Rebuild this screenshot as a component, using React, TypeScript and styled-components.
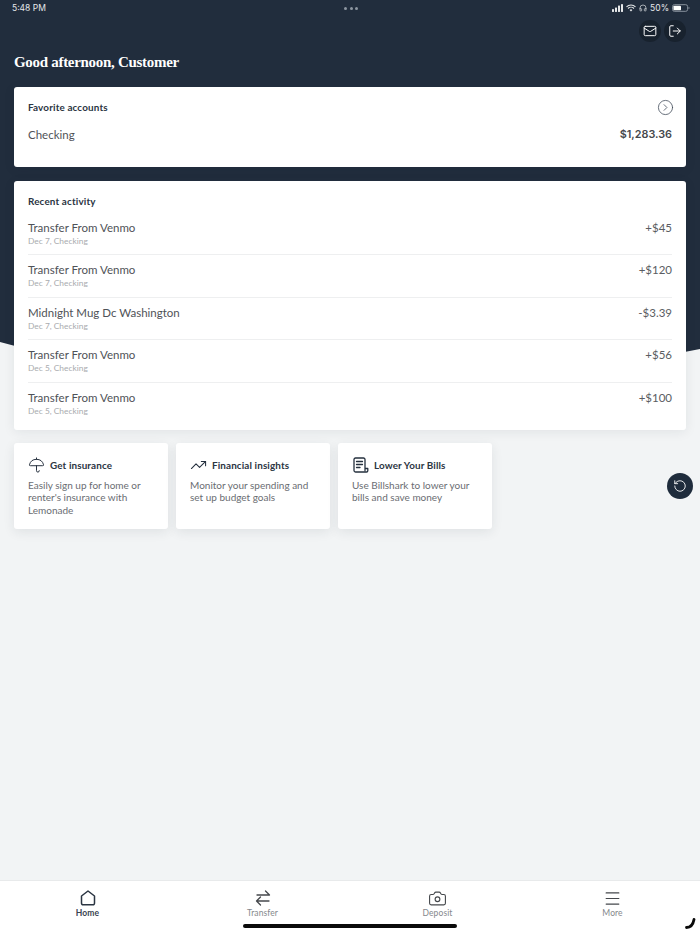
import React from "react";
import styled, { createGlobalStyle } from "styled-components";
import { Mail, LogOut, CircleChevronRight, Umbrella, TrendingUp, Camera, Menu, RotateCcw, Headphones } from "lucide-react";

const Global = createGlobalStyle`
  html, body { margin: 0; padding: 0; background: #f2f4f5; }
  * { box-sizing: border-box; }
`;
const Page = styled.div`
  position: relative; width: 700px; height: 934px; overflow: hidden; display: flex; flex-direction: column;
  background: #f2f4f5; font-family: "Lato", "Noto Sans", sans-serif; color: #4a4d52;
`;
const Backdrop = styled.svg`position: absolute; left: 0; top: 0; width: 700px; height: 370px;`;
const Main = styled.main`position: relative; flex: 1; min-height: 0; display: flex; flex-direction: column;`;
const StatusBar = styled.div`
  height: 16px; padding: 0 10px 0 12px; display: grid; grid-template-columns: 1fr auto 1fr; align-items: center;
  color: #e6e8ea; font: 8.5px "Inter", sans-serif;
`;
const Dots = styled.div`display: flex; gap: 2.5px; span { width: 3px; height: 3px; border-radius: 50%; background: #8d96a1; }`;
const StatusRight = styled.div`display: flex; justify-content: flex-end; align-items: center; gap: 3px;`;
const Actions = styled.div`display: flex; justify-content: flex-end; gap: 3px; padding: 4px 14px 0 0;`;
const Circle = styled.div`
  width: 22px; height: 22px; border-radius: 50%; background: #18222e; color: #fff;
  display: flex; align-items: center; justify-content: center;
`;
const Greeting = styled.h1`
  margin: 9px 0 0 14px; height: 22px; font: 700 15px/22px "Liberation Serif", serif; color: #fff; letter-spacing: -0.3px;
`;
const Card = styled.section`
  margin: 14px 14px 0; background: #fff; border-radius: 3px; padding: 0 14px; box-shadow: 0 2px 12px rgba(30,40,50,.08);
`;
const FavCard = styled(Card)`height: 80px; padding-top: 12px;`;
const HeadRow = styled.div`display: flex; justify-content: space-between; align-items: center; height: 17px;`;
const Heading = styled.h2`margin: 0; font: 700 9.9px/17px "Lato", sans-serif; color: #2b3542; letter-spacing: .15px;`;
const Chevron = styled(CircleChevronRight)`margin-right: -1.5px;`;
const AccountRow = styled.div`display: flex; justify-content: space-between; align-items: center; margin-top: 9px; height: 18px;`;
const AccountName = styled.span`font-size: 11.5px; color: #4f5257;`;
const Balance = styled.span`font: 600 10.8px "Inter", sans-serif; color: #45484c;`;
const ActivityCard = styled(Card)`height: 249px; padding-top: 12px;`;
const Row = styled.div`
  display: flex; justify-content: space-between; height: 42.4px; padding-top: 8px;
  &:not(:last-child) { border-bottom: 1px solid #eeeff0; }
`;
const RowList = styled.div`margin-top: 3px;`;
const RowTitle = styled.div`font-size: 11.5px; line-height: 14px; color: #4f5257;`;
const RowSub = styled.div`font-size: 8.4px; line-height: 12px; color: #a9abae;`;
const Amount = styled.div`font-size: 11.5px; line-height: 14px; color: #5a5d62;`;
const Promos = styled.div`display: grid; grid-template-columns: repeat(3, 153.5px); gap: 8.5px; padding: 13px 14px 0;`;
const Promo = styled.article`
  height: 86px; background: #fff; border-radius: 3px; padding: 13px 14px 0; box-shadow: 0 3px 12px rgba(30,40,50,.09);
`;
const PromoHead = styled.div`display: flex; align-items: center; gap: 5px; height: 18px; color: #25303e;`;
const IconSlot = styled.span`width: 17px; height: 18px; display: flex; align-items: center; justify-content: center; flex: none;`;
const PromoTitle = styled.h3`margin: 0; font: 700 9.9px/18px "Lato", sans-serif; color: #2b3542; letter-spacing: .12px;`;
const PromoText = styled.p`margin: 5px 0 0; font-size: 10px; line-height: 12.3px; color: #6a6d72;`;
const Floating = styled.div`
  position: absolute; left: 667px; top: 473px; width: 26px; height: 26px; border-radius: 50%; background: #1f2c3c; color: #fff;
  display: flex; align-items: center; justify-content: center;
`;
const TabBar = styled.nav`
  height: 54px; flex: none; background: #fff; border-top: 1px solid #e8eaeb; display: grid; grid-template-columns: repeat(4, 175px);
`;
const Tab = styled.div<{ $active?: boolean }>`
  display: grid; grid-template-rows: 17px 12px; align-content: start; justify-items: center; align-items: center;
  padding-top: 8.5px; color: ${p => p.$active ? "#2b3542" : "#45484c"};
  span { font-size: 8.5px; line-height: 12px; font-weight: ${p => p.$active ? 700 : 400}; color: ${p => p.$active ? "#3a4350" : "#85888c"}; letter-spacing: .1px; }
  svg { display: block; }
`;
const HomeBar = styled.div`position: absolute; left: 243px; top: 924px; width: 214px; height: 4px; border-radius: 2px; background: #0a0a0a;`;
const Corner = styled.svg`position: absolute; left: 684px; top: 918px;`;

const rows = [
  ["Transfer From Venmo", "Dec 7, Checking", "+$45"],
  ["Transfer From Venmo", "Dec 7, Checking", "+$120"],
  ["Midnight Mug Dc Washington", "Dec 7, Checking", "-$3.39"],
  ["Transfer From Venmo", "Dec 5, Checking", "+$56"],
  ["Transfer From Venmo", "Dec 5, Checking", "+$100"],
];

const BillIcon = () => (
  <svg width="16" height="16" viewBox="0 0 16 16" fill="none" stroke="currentColor" strokeWidth="1.300" strokeLinecap="round" strokeLinejoin="round">
    <path d="M12 13.500V2.500A1.500 1.500 0 0 0 10.500 1h-8A1.500 1.500 0 0 0 1 2.500v11A1.500 1.500 0 0 0 2.500 15h11a1.300 1.300 0 0 0 1.300-1.300V11.500H12" />
    <path d="M3.500 4.500h6M3.500 7.500h6M3.500 10.500h3.500" />
  </svg>
);
const HomeIcon = () => (
  <svg width="16" height="18" viewBox="0 0 16 18" fill="none" stroke="currentColor" strokeWidth="1.500" strokeLinejoin="round">
    <path d="M8 2 L14.500 7v7.300a1.500 1.500 0 0 1-1.500 1.500H3a1.500 1.500 0 0 1-1.500-1.500V7z" />
  </svg>
);
const TransferIcon = () => (
  <svg width="16" height="18" viewBox="0 0 16 18" fill="none" stroke="currentColor" strokeWidth="1.300" strokeLinecap="round" strokeLinejoin="round">
    <path d="M2 6h12.500M10.500 2l4 4M14 12H1.500M5.500 8l-4 4 4 4" />
  </svg>
);
const Signal = () => (
  <svg width="11" height="8" viewBox="0 0 11 8" fill="#e6e8ea">
    <rect x="0" y="5" width="2" height="3" rx=".4" /><rect x="3" y="3.500" width="2" height="4.500" rx=".4" />
    <rect x="6" y="1.500" width="2" height="6.500" rx=".4" /><rect x="9" y="0" width="2" height="8" rx=".4" />
  </svg>
);
const Wifi = () => (
  <svg width="10" height="8" viewBox="0 0 10 8" fill="none" stroke="#e6e8ea" strokeWidth="1.100">
    <path d="M.5 2.800a6.500 6.500 0 0 1 9 0M2 4.500a4.300 4.300 0 0 1 6 0" /><path d="M3.600 6 5 7.600 6.400 6a2 2 0 0 0-2.800 0z" fill="#e6e8ea" stroke="none" />
  </svg>
);
const Battery = () => (
  <svg width="18" height="8" viewBox="0 0 19 8">
    <rect x=".5" y=".5" width="16" height="7" rx="2" fill="none" stroke="#8d96a1" />
    <rect x="1.500" y="1.500" width="8" height="5" rx="1" fill="#fff" />
    <path d="M17.500 3v2a1 1 0 0 0 1-1 1 1 0 0 0-1-1z" fill="#8d96a1" />
  </svg>
);

export default function App() {
  return (
    <Page>
      <Global />
      <Backdrop viewBox="0 0 700 370" aria-hidden="true">
        <path d="M0 0H700V349C600 370 480 372 350 366C200 360 90 368 0 342Z" fill="#212d3d" />
      </Backdrop>
      <Main>
        <StatusBar>
          <span>5:48 PM</span>
          <Dots><span /><span /><span /></Dots>
          <StatusRight><Signal /><Wifi /><Headphones size={8} strokeWidth={2} /><span>50%</span><Battery /></StatusRight>
        </StatusBar>
        <Actions>
          <Circle><Mail size={14} strokeWidth={1.700} /></Circle>
          <Circle><LogOut size={14} strokeWidth={1.700} /></Circle>
        </Actions>
        <Greeting>Good afternoon, Customer</Greeting>
        <FavCard>
          <HeadRow><Heading>Favorite accounts</Heading><Chevron size={17} strokeWidth={1.100} color="#3f4a58" /></HeadRow>
          <AccountRow><AccountName>Checking</AccountName><Balance>$1,283.36</Balance></AccountRow>
        </FavCard>
        <ActivityCard>
          <Heading>Recent activity</Heading>
          <RowList>
            {rows.map((r, i) => (
              <Row key={i}>
                <div><RowTitle>{r[0]}</RowTitle><RowSub>{r[1]}</RowSub></div>
                <Amount>{r[2]}</Amount>
              </Row>
            ))}
          </RowList>
        </ActivityCard>
        <Promos>
          <Promo>
            <PromoHead><IconSlot><Umbrella size={20} strokeWidth={1.400} /></IconSlot><PromoTitle>Get insurance</PromoTitle></PromoHead>
            <PromoText>Easily sign up for home or renter's insurance with Lemonade</PromoText>
          </Promo>
          <Promo>
            <PromoHead><IconSlot><TrendingUp size={20} strokeWidth={1.500} /></IconSlot><PromoTitle>Financial insights</PromoTitle></PromoHead>
            <PromoText>Monitor your spending and set up budget goals</PromoText>
          </Promo>
          <Promo>
            <PromoHead><IconSlot><BillIcon /></IconSlot><PromoTitle>Lower Your Bills</PromoTitle></PromoHead>
            <PromoText>Use Billshark to lower your bills and save money</PromoText>
          </Promo>
        </Promos>
        <Floating><RotateCcw size={14} strokeWidth={1.500} /></Floating>
      </Main>
      <TabBar>
        <Tab $active><HomeIcon /><span>Home</span></Tab>
        <Tab><TransferIcon /><span>Transfer</span></Tab>
        <Tab><Camera size={19} strokeWidth={1.400} /><span>Deposit</span></Tab>
        <Tab><Menu size={19} strokeWidth={1.500} /><span>More</span></Tab>
      </TabBar>
      <HomeBar />
      <Corner width="12" height="12" viewBox="0 0 12 12" fill="none" stroke="#0a0a0a" strokeWidth="2.800" strokeLinecap="round"><path d="M2.500 9.500c4 0 6.500-2.500 7.500-8" /></Corner>
    </Page>
  );
}
